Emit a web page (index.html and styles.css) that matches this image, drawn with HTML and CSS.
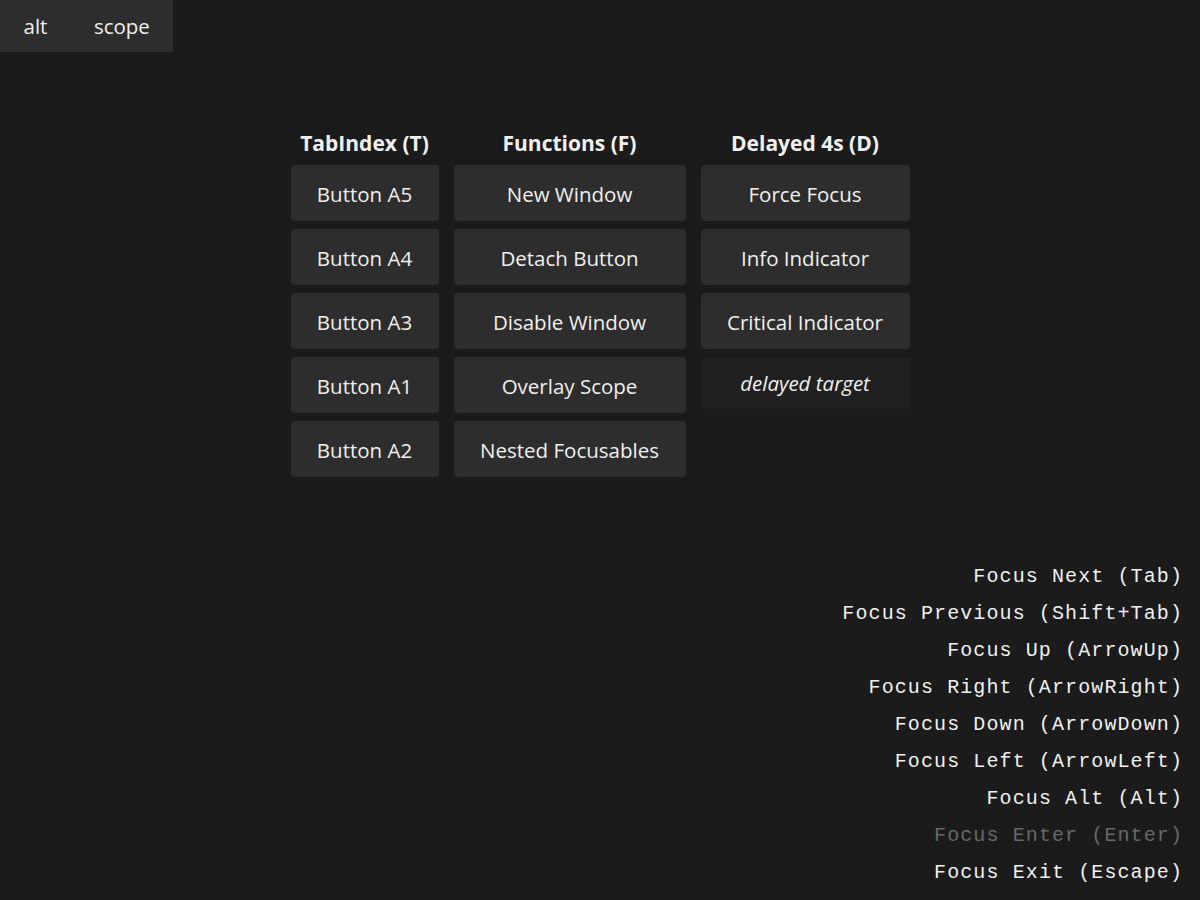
FILE: index.html
```html
<!DOCTYPE html>
<html lang="en">
<head>
<meta charset="utf-8">
<title>Focus demo</title>
<link rel="stylesheet" href="styles.css">
</head>
<body>
<div class="page">
  <nav class="topbar">
    <button class="top-btn">alt</button>
    <button class="top-btn">scope</button>
  </nav>
  <main class="grid">
    <section class="col col-t">
      <h2 class="col-title">TabIndex (T)</h2>
      <button class="btn">Button A5</button>
      <button class="btn">Button A4</button>
      <button class="btn">Button A3</button>
      <button class="btn">Button A1</button>
      <button class="btn">Button A2</button>
    </section>
    <section class="col col-f">
      <h2 class="col-title">Functions (F)</h2>
      <button class="btn">New Window</button>
      <button class="btn">Detach Button</button>
      <button class="btn">Disable Window</button>
      <button class="btn">Overlay Scope</button>
      <button class="btn">Nested Focusables</button>
    </section>
    <section class="col col-d">
      <h2 class="col-title">Delayed 4s (D)</h2>
      <button class="btn">Force Focus</button>
      <button class="btn">Info Indicator</button>
      <button class="btn">Critical Indicator</button>
      <div class="target">delayed target</div>
    </section>
  </main>
  <ul class="keys">
    <li>Focus Next (Tab)</li>
    <li>Focus Previous (Shift+Tab)</li>
    <li>Focus Up (ArrowUp)</li>
    <li>Focus Right (ArrowRight)</li>
    <li>Focus Down (ArrowDown)</li>
    <li>Focus Left (ArrowLeft)</li>
    <li>Focus Alt (Alt)</li>
    <li class="dim">Focus Enter (Enter)</li>
    <li>Focus Exit (Escape)</li>
  </ul>
</div>
</body>
</html>
```

FILE: styles.css
```css
html, body {
  margin: 0;
  padding: 0;
  background: #1b1b1b;
  color: #f0f0f0;
  font-family: "Open Sans", "Noto Sans", sans-serif;
}

.page {
  min-height: 100vh;
  display: flex;
  flex-direction: column;
  box-sizing: border-box;
}

.topbar {
  display: flex;
  align-self: flex-start;
  background: #2d2d2d;
  height: 52px;
}

.top-btn {
  background: transparent;
  border: 0;
  color: #f0f0f0;
  font-family: inherit;
  font-size: 20.5px;
  padding: 0 23px 0 23.5px;
  height: 52px;
  cursor: pointer;
}

.grid {
  display: grid;
  grid-template-columns: 148px 232px 209px;
  column-gap: 15px;
  justify-content: center;
  align-items: start;
  margin-top: 77px;
}

.col {
  display: flex;
  flex-direction: column;
  gap: 8px;
}

.col-title {
  margin: 0;
  height: 28px;
  line-height: 28px;
  text-align: center;
  font-size: 21px;
  font-weight: 700;
}

.btn {
  height: 56px;
  border: 0;
  border-radius: 4px;
  background: #2d2d2d;
  color: #f0f0f0;
  font-family: inherit;
  font-size: 20.5px;
  padding: 1px 0 0 0;
  cursor: pointer;
}

.target {
  height: 52px;
  line-height: 52px;
  border-radius: 4px;
  background: #202020;
  text-align: center;
  font-size: 20.5px;
  font-style: italic;
}

.keys {
  list-style: none;
  margin: auto 0 0 0;
  padding: 0 17px 9px 0;
  text-align: right;
  font-family: "Liberation Mono", "Courier New", monospace;
  font-size: 20px;
  letter-spacing: 1.1px;
  line-height: 37px;
}

.keys .dim {
  color: #686868;
}
```
